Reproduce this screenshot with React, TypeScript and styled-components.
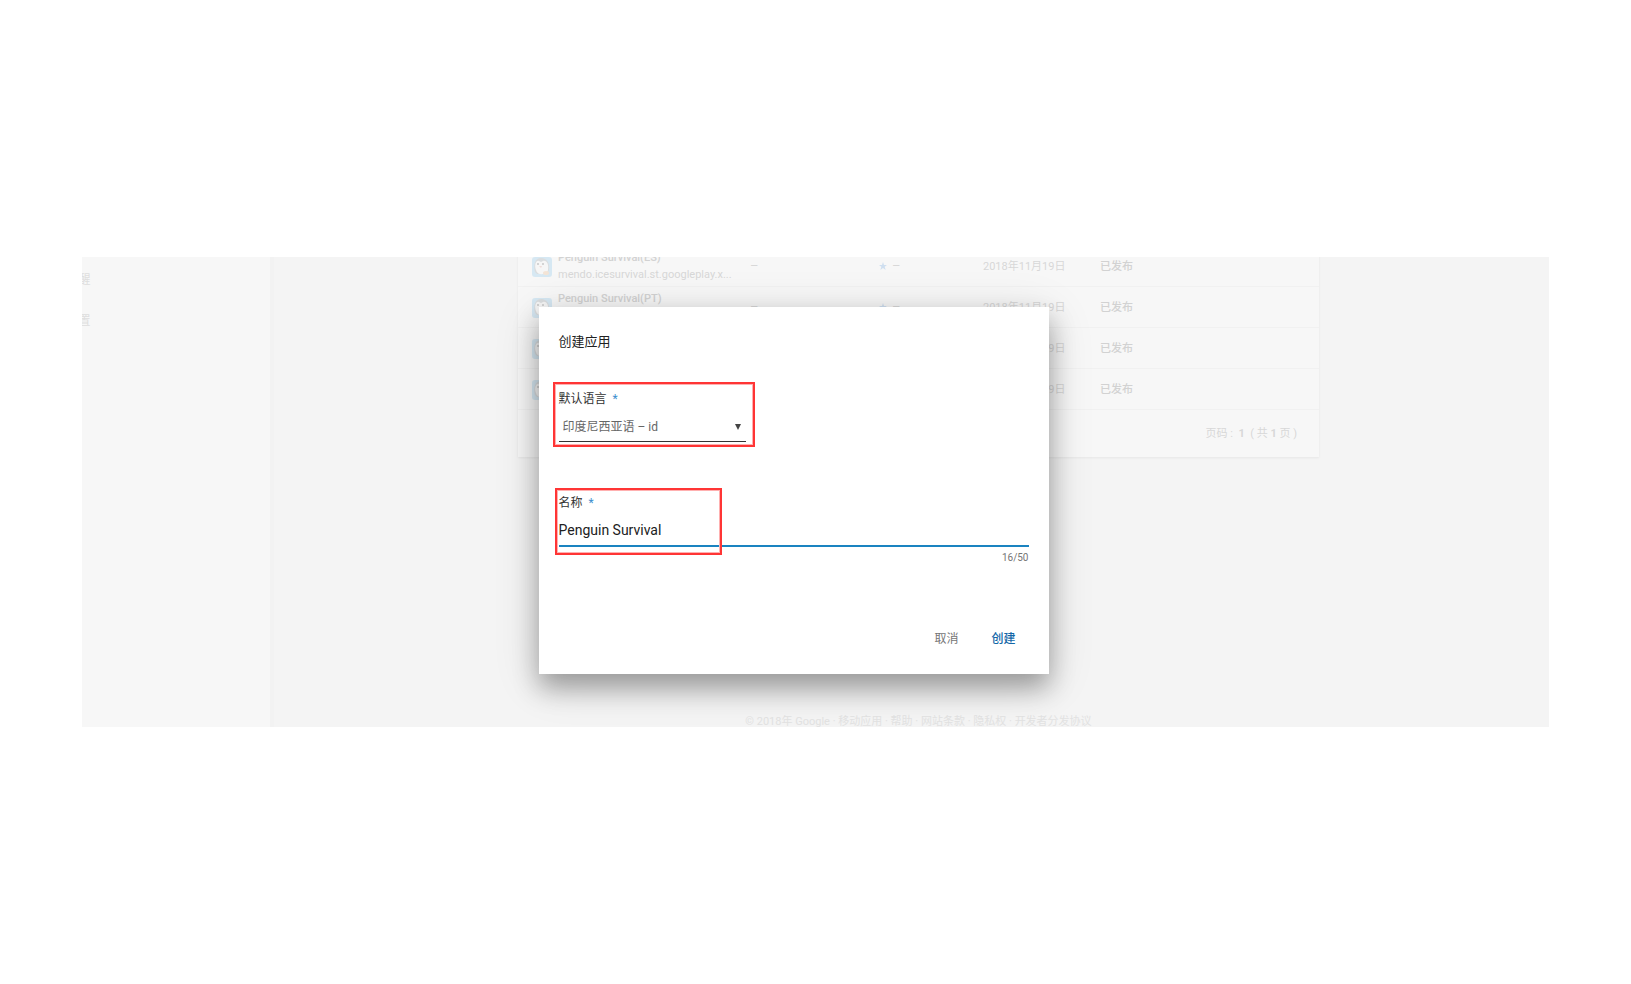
import React, { useState } from 'react';
import styled, { createGlobalStyle } from 'styled-components';

const Global = createGlobalStyle`
  *, *::before, *::after { box-sizing: border-box; }
  body { margin: 0; background: #ffffff; }
  body, button, input, select { font-family: Roboto, "Noto Sans CJK SC", sans-serif; }
`;

const Page = styled.div`
  min-height: 100vh;
  padding: 0 5%;
  display: flex;
  align-items: center;
`;

const Frame = styled.div`
  position: relative;
  flex: 1;
  min-width: 0;
  overflow: hidden;
  display: flex;
  background: #f4f4f4;
`;

const Sidebar = styled.nav`
  flex: none;
  width: 192px;
  padding-top: 13px;
  background: #f7f7f7;
  border-right: 4px solid #f2f2f2;
`;

const SideLink = styled.a`
  display: flex;
  justify-content: flex-end;
  width: 9px;
  height: 20px;
  margin-bottom: 21px;
  font-size: 12px;
  line-height: 20px;
  white-space: nowrap;
  color: #dedede;
  text-decoration: none;
`;

const Main = styled.main`
  flex: 1;
  min-width: 0;
  display: flex;
  flex-direction: column;
  align-items: center;
  padding-left: 14px;
`;

const Card = styled.section`
  width: 801px;
  margin-top: -11px;
  background: #f7f7f7;
  box-shadow: 0 1px 2px #e6e6e6;
`;

const AppTable = styled.table`
  width: 100%;
  table-layout: fixed;
  border-collapse: separate;
  border-spacing: 0;
  font-size: 11px;
  line-height: 20px;
  color: #d8d8d8;
`;

const Cell = styled.td<{ $strong?: boolean }>`
  height: 41px;
  padding: 1px 0 0;
  border-bottom: 1px solid #f1f1f1;
  font-weight: ${(p) => (p.$strong ? 500 : 400)};
  color: ${(p) => (p.$strong ? '#d2d2d2' : '#d8d8d8')};
  vertical-align: middle;
`;

const IconCell = styled(Cell)`
  padding: 1px 0 0 14px;
  svg { display: block; }
`;

const NameCell = styled(Cell)`
  padding: 0;
`;

const AppName = styled.div`
  font-size: 11px;
  line-height: 17px;
  font-weight: 500;
  color: #d2d2d2;
`;

const PackageName = styled.div`
  width: 174px;
  font-size: 11px;
  line-height: 17px;
  overflow: hidden;
  white-space: nowrap;
`;

const Star = styled.svg`
  margin-right: 5px;
  fill: #cfdff0;
`;

const Dash = styled.span`
  font-size: 13px;
`;

const Pager = styled.div`
  height: 47px;
  padding: 0 22px 4px 0;
  display: flex;
  align-items: center;
  justify-content: flex-end;
  font-size: 11px;
  color: #d8d8d8;
  span { white-space: pre; }
  b { font-weight: 700; }
`;

const Footer = styled.footer`
  height: 14px;
  margin-top: 256px;
  font-size: 11px;
  line-height: 18px;
  color: #e2e2e2;
  white-space: nowrap;
  a { color: inherit; text-decoration: none; }
`;

const Overlay = styled.div`
  position: absolute;
  inset: 0;
  display: flex;
  justify-content: center;
  align-items: flex-start;
  padding: 50px 44px 0 0;
`;

const Dialog = styled.form`
  width: 510px;
  padding: 25px 20px 20px;
  background: #ffffff;
  box-shadow: 0 14px 24px rgba(0, 0, 0, 0.3), 0 8px 44px rgba(0, 0, 0, 0.14);
`;

const Title = styled.h1`
  margin: 0 0 39px;
  font-size: 13px;
  line-height: 20px;
  font-weight: 400;
  color: #212121;
`;

const Field = styled.div<{ $width: string }>`
  position: relative;
  width: ${(p) => p.$width};
`;

const Label = styled.label`
  display: block;
  font-size: 12px;
  line-height: 16px;
  color: #333333;
`;

const Required = styled.span`
  margin-left: 6px;
  color: #3f8fce;
`;

const SelectBox = styled.div`
  display: flex;
  align-items: center;
  margin-top: 6px;
  border-bottom: 1px solid #333333;
`;

const Select = styled.select`
  appearance: none;
  flex: 1;
  height: 28px;
  padding: 0 4px;
  border: 0;
  outline: 0;
  background: transparent;
  font-size: 12px;
  color: #666666;
`;

const Caret = styled.svg`
  flex: none;
  margin-right: 5px;
`;

const NameInput = styled.input`
  display: block;
  width: 100%;
  height: 34px;
  margin-top: 2px;
  padding: 2px 0 0;
  border: 0;
  border-bottom: 2px solid #1a83c0;
  outline: 0;
  background: transparent;
  font-size: 14px;
  color: #212121;
`;

const Counter = styled.div`
  margin-top: 3px;
  font-size: 10px;
  line-height: 16px;
  text-align: right;
  color: #757575;
`;

const Highlight = styled.div<{ $inset: string; $width: string }>`
  position: absolute;
  inset: ${(p) => p.$inset};
  width: ${(p) => p.$width};
  border: 2px solid #ff3535;
  outline: 1px solid #ffb0b0;
  outline-offset: -3px;
  pointer-events: none;
`;

const Spacer = styled.div`
  height: 53px;
`;

const Actions = styled.div`
  display: flex;
  justify-content: flex-end;
  gap: 9px;
  margin-top: 55px;
  padding: 0 1px 1px 0;
`;

const Button = styled.button<{ $primary?: boolean }>`
  height: 32px;
  padding: 0 12px;
  border: 0;
  background: transparent;
  font-size: 12px;
  font-weight: ${(p) => (p.$primary ? 500 : 400)};
  color: ${(p) => (p.$primary ? '#1467a8' : '#757575')};
`;

const apps = [
  { name: 'Penguin Survival(ES)', pkg: 'mendo.icesurvival.st.googleplay.x...' },
  { name: 'Penguin Survival(PT)', pkg: 'mendo.icesurvival.st.googleplay.x...' },
  { name: 'Penguin Survival(RU)', pkg: 'mendo.icesurvival.st.googleplay.x...' },
  { name: 'Penguin Survival(TH)', pkg: 'mendo.icesurvival.st.googleplay.x...' },
];

const PenguinIcon = () => (
  <svg width="20" height="20" viewBox="0 0 20 20" aria-hidden="true">
    <rect width="20" height="20" rx="3" fill="#d6e8f3" />
    <path d="M3 15C1 8 3 1 9 1c6 0 9 5 8 12l-2 4H5z" fill="#dadddf" />
    <path d="M4 13C2 8 4 3 7 4l2 1 2-1c4-1 6 4 5 9-1 5-11 6-12 0z" fill="#f6f6f6" />
    <circle cx="6" cy="7" r="1" fill="#c8c8c8" />
    <circle cx="11" cy="7" r="1" fill="#c8c8c8" />
    <path d="M7 9h3l-1 2z" fill="#f0dcd8" />
    <ellipse cx="14" cy="16" rx="3" ry="2" fill="#f3e4d6" />
  </svg>
);

export default function App() {
  const [name, setName] = useState('Penguin Survival');
  return (
    <>
      <Global />
      <Page>
        <Frame>
          <Sidebar>
            <SideLink href="#alerts">提醒</SideLink>
            <SideLink href="#settings">设置</SideLink>
          </Sidebar>
          <Main>
            <Card>
              <AppTable>
                <colgroup>
                  <col style={{ width: 40 }} />
                  <col style={{ width: 192 }} />
                  <col style={{ width: 129 }} />
                  <col style={{ width: 104 }} />
                  <col style={{ width: 117 }} />
                  <col />
                </colgroup>
                <tbody>
                  {apps.map((app) => (
                    <tr key={app.name}>
                      <IconCell><PenguinIcon /></IconCell>
                      <NameCell>
                        <AppName>{app.name}</AppName>
                        <PackageName>{app.pkg}</PackageName>
                      </NameCell>
                      <Cell><Dash>–</Dash></Cell>
                      <Cell>
                        <Star width="8" height="8" viewBox="0 0 24 24" aria-hidden="true">
                          <path d="M12 0l3 9h9l-7 5 3 10-8-6-8 6 3-10-7-5h9z" />
                        </Star>
                        <Dash>–</Dash>
                      </Cell>
                      <Cell>2018年11月19日</Cell>
                      <Cell $strong>已发布</Cell>
                    </tr>
                  ))}
                </tbody>
              </AppTable>
              <Pager><span>页码 :  <b>1</b>  ( 共 <b>1</b> 页 )</span></Pager>
            </Card>
            <Footer>
              © 2018年 Google · <a href="#mobile">移动应用</a> · <a href="#help">帮助</a> · <a href="#terms">网站条款</a> · <a href="#privacy">隐私权</a> · <a href="#agreement">开发者分发协议</a>
            </Footer>
          </Main>
          <Overlay>
            <Dialog role="dialog" aria-labelledby="dialog-title" onSubmit={(e) => e.preventDefault()}>
              <Title id="dialog-title">创建应用</Title>
              <Field $width="187px">
                <Label htmlFor="language">默认语言<Required>*</Required></Label>
                <SelectBox>
                  <Select id="language" defaultValue="id">
                    <option value="id">印度尼西亚语 – id</option>
                  </Select>
                  <Caret width="6" height="6" viewBox="0 0 6 6" aria-hidden="true">
                    <path d="M0 0h6L3 6z" fill="#444444" />
                  </Caret>
                </SelectBox>
                <Highlight $inset="-9px auto -5px -6px" $width="202px" />
              </Field>
              <Spacer />
              <Field $width="100%">
                <Label htmlFor="name">名称<Required>*</Required></Label>
                <NameInput id="name" value={name} maxLength={50} onChange={(e) => setName(e.target.value)} />
                <Highlight $inset="-7px auto -8px -4px" $width="167px" />
              </Field>
              <Counter>{name.length}/50</Counter>
              <Actions>
                <Button type="button">取消</Button>
                <Button type="submit" $primary>创建</Button>
              </Actions>
            </Dialog>
          </Overlay>
        </Frame>
      </Page>
    </>
  );
}
